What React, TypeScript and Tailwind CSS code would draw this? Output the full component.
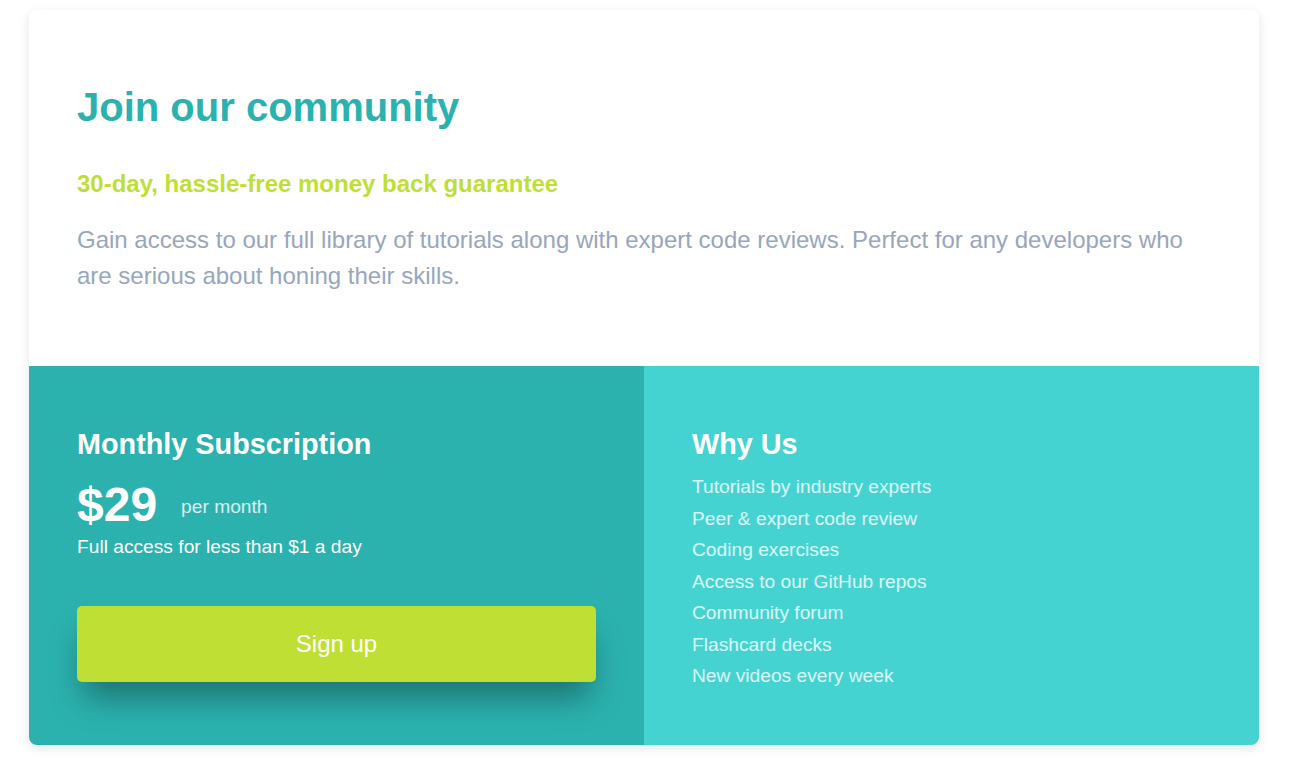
import React from 'react';

const perks = [
  'Tutorials by industry experts',
  'Peer & expert code review',
  'Coding exercises',
  'Access to our GitHub repos',
  'Community forum',
  'Flashcard decks',
  'New videos every week',
];

const App: React.FC = () => {
  return (
    <div className="min-h-screen bg-white pt-[10px] pl-[29px] font-['Liberation_Sans',Arial,sans-serif]">
      <div className="w-[1230px] rounded-lg overflow-hidden shadow-[0_3px_12px_rgba(0,0,0,0.1)] bg-white">
        <section className="px-12 pt-[73px] pb-[72px]">
          <h1 className="text-[40px] leading-[48px] font-bold text-[#2bb2af]">Join our community</h1>
          <h2 className="mt-[37px] text-[24px] leading-[32px] font-bold text-[#c0df34]">
            30-day, hassle-free money back guarantee
          </h2>
          <p className="mt-[22px] text-[24px] leading-[36px] text-[#98a6bd]">
            Gain access to our full library of tutorials along with expert code reviews. Perfect for any developers who
            are serious about honing their skills.
          </p>
        </section>

        <div className="grid grid-cols-2">
          <section className="bg-[#2bb2af] px-12 pt-[60px] pb-[63px] text-white">
            <h3 className="text-[28.8px] leading-[36px] font-bold">Monthly Subscription</h3>
            <div className="mt-[15px] flex items-center gap-6">
              <span className="text-[48px] leading-[56px] font-bold">$29</span>
              <span className="mt-[3px] text-[19.2px] leading-[28px] text-white/80">per month</span>
            </div>
            <p className="text-[19.2px] leading-[28px]">Full access for less than $1 a day</p>
            <button className="mt-[45px] w-full h-[76px] rounded-[5px] bg-[#c0df34] text-[24px] text-white shadow-[0_22px_32px_-6px_rgba(0,0,0,0.35)]">
              Sign up
            </button>
          </section>

          <section className="bg-[#45d3d1] px-12 pt-[60px] text-white">
            <h3 className="text-[28.8px] leading-[36px] font-bold">Why Us</h3>
            <ul className="mt-[9px]">
              {perks.map((p) => (
                <li key={p} className="text-[19.2px] leading-[31.5px] text-white/80">
                  {p}
                </li>
              ))}
            </ul>
          </section>
        </div>
      </div>
    </div>
  );
};

export default App;
